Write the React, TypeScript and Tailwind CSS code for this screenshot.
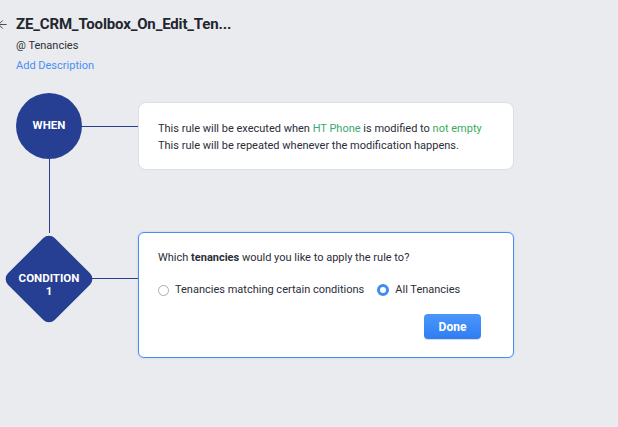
import { ArrowLeft } from 'lucide-react'

function Radio({ checked }: { checked?: boolean }) {
  return checked ? (
    <span className="block w-[12px] h-[12px] rounded-full border-[3px] border-[#3f8cf4] bg-white shrink-0" />
  ) : (
    <span className="block w-[11px] h-[11px] rounded-full border border-[#a9adb5] bg-white shrink-0" />
  )
}

export default function App() {
  return (
    <div className="w-[618px] h-[427px] overflow-hidden bg-[#e9ebee] text-[#23252f] font-['Roboto',sans-serif]">
      {/* header */}
      <div className="pt-[15px]">
        <div className="flex items-center h-[18px]">
          <ArrowLeft size={13} strokeWidth={1.6} className="ml-[-4px] mr-[7px] text-[#333]" />
          <span className="text-[15px] font-bold tracking-[-0.15px] whitespace-nowrap text-[#23252f]">ZE_CRM_Toolbox_On_Edit_Ten...</span>
        </div>
        <div className="pl-[16px] mt-[6px] text-[11px] leading-[14px] text-[#2d2f38]">@ Tenancies</div>
        <div className="pl-[16px] mt-[6px] text-[11px] leading-[14px] text-[#4a8ff6]">Add Description</div>
      </div>

      {/* flow */}
      <div className="mt-[20px]">
        <div className="flex items-start">
          <div className="ml-[16px] w-[66px] flex flex-col items-center shrink-0">
            <div className="w-[66px] h-[66px] rounded-full bg-[#263f93] flex items-center justify-center text-white text-[11.5px] font-bold">
              WHEN
            </div>
            <div className="w-px h-[74px] bg-[#263f93]" />
          </div>
          <div className="mt-[33px] w-[56px] h-px bg-[#263f93] shrink-0" />
          <div className="mt-[9px] w-[376px] h-[68px] rounded-[8px] bg-white border border-[#dcdfe4] pl-[19px] pt-[17px] text-[11px] leading-[17px] text-[#2b2d38] whitespace-nowrap">
            <div>
              This rule will be executed when <span className="text-[#38a870]">HT Phone</span> is modified to{' '}
              <span className="text-[#3aab5c]">not empty</span>
            </div>
            <div>This rule will be repeated whenever the modification happens.</div>
          </div>
        </div>

        <div className="flex items-start">
          <div className="ml-[16px] w-[66px] flex justify-center shrink-0">
            <div className="relative z-10 w-[92px] h-[92px] shrink-0 flex items-center justify-center">
              <div className="w-[66px] h-[66px] rounded-[8px] bg-[#263f93] rotate-45" />
              <div className="absolute inset-0 pt-[12px] flex flex-col items-center justify-center text-white text-[11.5px] font-bold leading-[13px]">
                <span>CONDITION</span>
                <span>1</span>
              </div>
            </div>
          </div>
          <div className="mt-[45px] w-[56px] h-px bg-[#263f93] shrink-0" />
          <div className="mt-[-1px] w-[376px] h-[126px] rounded-[6px] bg-white border border-[#4a8cf6] shadow-[0_0_2px_rgba(74,140,246,0.35)] pl-[19px] pr-[32px] pt-[17px] flex flex-col text-[11px] text-[#2b2d38] whitespace-nowrap">
            <div className="leading-[16px]">
              Which <span className="font-bold">tenancies</span> would you like to apply the rule to?
            </div>
            <div className="mt-[16px] flex items-center h-[16px]">
              <Radio />
              <span className="ml-[6px]">Tenancies matching certain conditions</span>
              <span className="ml-[13px]"><Radio checked /></span>
              <span className="ml-[6px]">All Tenancies</span>
            </div>
            <div className="mt-[16px] flex justify-end">
              <button className="w-[57px] h-[25px] rounded-[4px] bg-gradient-to-b from-[#4a97fb] to-[#2f7df2] text-white text-[12px] font-bold shadow-[0_1px_1px_rgba(0,0,0,0.15)]">
                Done
              </button>
            </div>
          </div>
        </div>
      </div>
    </div>
  )
}
